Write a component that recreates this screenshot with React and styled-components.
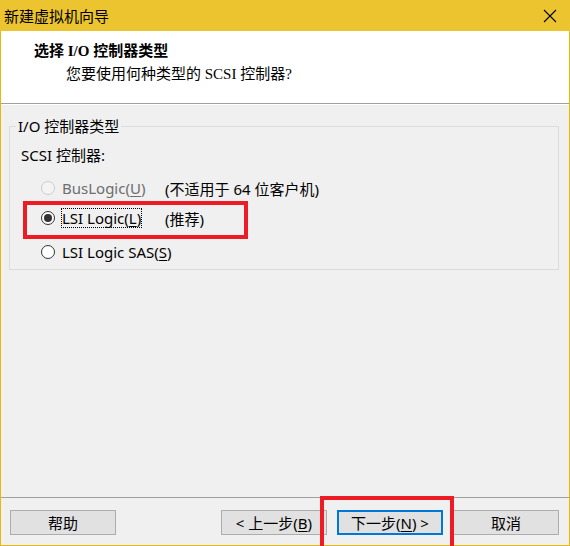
import React from "react";
import styled, { createGlobalStyle } from "styled-components";

const GlobalStyle = createGlobalStyle`
  html, body {
    margin: 0;
    padding: 0;
    background: #ffffff;
  }
  * {
    box-sizing: border-box;
  }
`;

const FONT = `"Noto Sans", "Noto Sans CJK SC", sans-serif`;

const Window = styled.div`
  position: relative;
  width: 570px;
  height: 546px;
  display: flex;
  flex-direction: column;
  background-color: #f0f0f0;
  border: 1px solid #e8b80c;
  border-top: none;
  font-family: ${FONT};
  font-size: 15px;
  color: #000;
`;

const TitleBar = styled.div`
  height: 31px;
  flex: none;
  display: flex;
  align-items: center;
  justify-content: space-between;
  background-color: #ecc42f;
  padding: 0 13px 0 3px;
  margin: 0 -1px;
`;

const TitleText = styled.span`
  font-size: 15px;
  line-height: 20px;
  padding-left: 1px;
`;

const Header = styled.div`
  height: 72px;
  flex: none;
  background-color: #ffffff;
  padding: 10px 0 0 33px;
`;

const HeaderTitle = styled.div`
  font-family: "Liberation Serif", "Noto Sans CJK SC", serif;
  font-weight: bold;
  font-size: 15px;
  line-height: 20px;
`;

const HeaderSub = styled.div`
  font-family: "Liberation Serif", "Noto Sans CJK SC", serif;
  font-size: 15px;
  line-height: 20px;
  margin: 3px 0 0 32px;
`;

const Etch = styled.div`
  flex: none;
  height: 2px;
  border-top: 1px solid #a0a0a0;
  border-bottom: 1px solid #ffffff;
`;

const Body = styled.div`
  flex: 1;
  padding: 11px 10px 0 8px;
`;

const Group = styled.fieldset`
  margin: 0;
  padding: 0 0 7px 0;
  border: 1px solid #dcdcdc;
  min-width: 0;
`;

const Legend = styled.legend`
  margin-left: 6px;
  padding: 0 2px;
  line-height: 20px;
`;

const GroupBody = styled.div`
  padding-left: 11px;
`;

const FieldLabel = styled.div`
  line-height: 20px;
  margin-top: 9px;
`;

const RadioRow = styled.div`
  display: flex;
  align-items: center;
  height: 20px;
  margin-top: ${(p) => p.$gap}px;
  padding-left: 20px;
  white-space: nowrap;
  color: ${(p) => (p.$disabled ? "#6d6d6d" : "#000")};
`;

const Circle = styled.span`
  flex: none;
  width: 14px;
  height: 14px;
  border-radius: 50%;
  border: 1px solid ${(p) => (p.$disabled ? "#cccccc" : "#333333")};
  background-color: ${(p) => (p.$disabled ? "#f4f4f4" : "#ffffff")};
  display: flex;
  align-items: center;
  justify-content: center;
  &::after {
    content: "";
    width: 8px;
    height: 8px;
    border-radius: 50%;
    background-color: #333333;
    display: ${(p) => (p.$checked ? "block" : "none")};
  }
`;

const RadioText = styled.span`
  width: 104px;
  margin-left: 6px;
  flex: none;
  display: flex;
`;

const LabelBox = styled.span`
  line-height: 18px;
  border: 1px dotted ${(p) => (p.$focused ? "#000" : "transparent")};
`;

const Note = styled.span`
  color: #000;
`;

const Footer = styled.div`
  flex: none;
  height: 48px;
  border-top: 1px solid #a0a0a0;
  display: flex;
  align-items: flex-start;
  padding: 12px 10px 0 9px;
`;

const Button = styled.button`
  width: 106px;
  height: 25px;
  padding: 0;
  font-family: ${FONT};
  font-size: 15px;
  color: #000;
  background-color: #e1e1e1;
  border: ${(p) => (p.$default ? "2px solid #0078d7" : "1px solid #adadad")};
  margin-left: ${(p) => p.$gap || 0}px;
  line-height: 20px;
`;

const Spacer = styled.div`
  flex: 1;
`;

const Marker = styled.div`
  position: absolute;
  border: 4px solid #ed1c24;
  pointer-events: none;
`;

const U = styled.span`
  text-decoration: underline;
  text-underline-offset: 2px;
`;

function CloseIcon() {
  return (
    <svg width="14" height="14" viewBox="0 0 14 14">
      <path d="M1 1 L13 13 M13 1 L1 13" stroke="#000" strokeWidth="1.1" />
    </svg>
  );
}

function Radio({ checked, disabled, focused, gap, label, note }) {
  return (
    <RadioRow $gap={gap} $disabled={disabled}>
      <Circle $checked={checked} $disabled={disabled} />
      <RadioText>
        <LabelBox $focused={focused}>{label}</LabelBox>
      </RadioText>
      {note && <Note>{note}</Note>}
    </RadioRow>
  );
}

export default function App() {
  return (
    <>
      <GlobalStyle />
      <Window>
        <TitleBar>
          <TitleText>新建虚拟机向导</TitleText>
          <CloseIcon />
        </TitleBar>
        <Header>
          <HeaderTitle>选择 I/O 控制器类型</HeaderTitle>
          <HeaderSub>您要使用何种类型的 SCSI 控制器?</HeaderSub>
        </Header>
        <Etch />
        <Body>
          <Group>
            <Legend>I/O 控制器类型</Legend>
            <GroupBody>
              <FieldLabel>SCSI 控制器:</FieldLabel>
              <Radio
                disabled
                gap={13}
                label={
                  <>
                    BusLogic(<U>U</U>)
                  </>
                }
                note="(不适用于 64 位客户机)"
              />
              <Radio
                checked
                focused
                gap={10}
                label={
                  <>
                    LSI Logic(<U>L</U>)
                  </>
                }
                note="(推荐)"
              />
              <Radio
                gap={14}
                label={
                  <>
                    LSI Logic SAS(<U>S</U>)
                  </>
                }
              />
            </GroupBody>
          </Group>
        </Body>
        <Footer>
          <Button>帮助</Button>
          <Spacer />
          <Button>
            &lt; 上一步(<U>B</U>)
          </Button>
          <Button $default $gap={10}>
            下一步(<U>N</U>) &gt;
          </Button>
          <Button $gap={10}>取消</Button>
        </Footer>
        <Marker style={{ left: 22, top: 201, width: 225, height: 38 }} />
        <Marker style={{ left: 319, top: 496, width: 134, height: 54 }} />
      </Window>
    </>
  );
}
